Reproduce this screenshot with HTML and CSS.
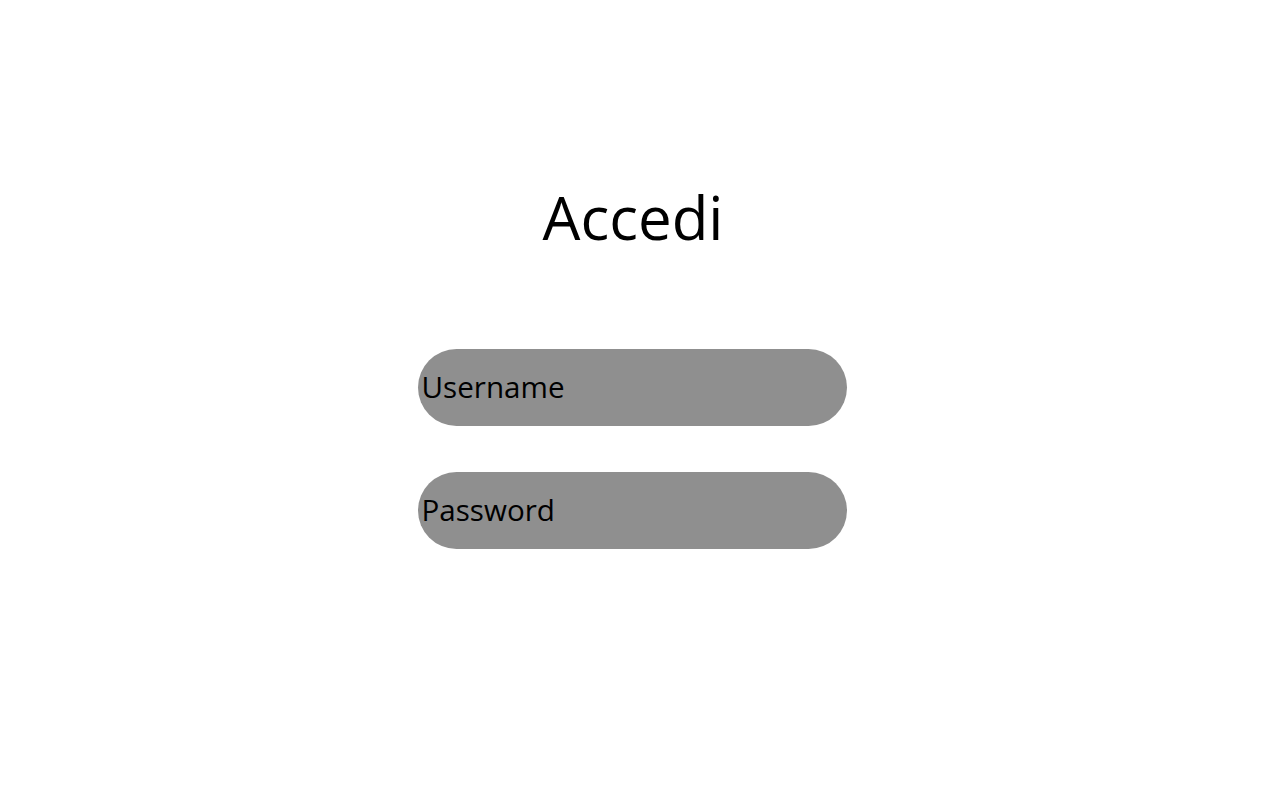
FILE: index.html
```html
<!DOCTYPE html>
<html lang="it">
  <head>
    <meta charset="UTF-8">
    <title>Accedi</title>

    <link rel="stylesheet" href="styles.css">
  </head>
  <body>
    <main class="login">
      <h1>Accedi</h1>
      <form class="login-form">
        <input class="field" type="text" placeholder="Username">
        <input class="field" type="password" placeholder="Password">
      </form>
    </main>
  </body>
</html>
```

FILE: styles.css
```css
html {
  box-sizing: border-box;
  font-family: "Open Sans", sans-serif;
}

*,
*:before,
*:after {
  box-sizing: inherit;
}

body {
  background: #fff;
  margin: 0;
  min-height: 100vh;
}

.login {
  align-items: center;
  display: flex;
  flex-direction: column;
  padding-top: 176px;
}

h1 {
  font-size: 60px;
  font-weight: 400;
  line-height: 82px;
  margin: 0 0 91px 0;
  transform: translateX(-7px);
}

.login-form {
  display: flex;
  flex-direction: column;
  gap: 46px;
  transform: translateX(-8px);
}

.field {
  background: #8f8f8f;
  border: none;
  border-radius: 40px;
  color: #000;
  font-family: "Open Sans", sans-serif;
  font-size: 29.6px;
  height: 77px;
  outline: none;
  padding: 0 3px 3px 4px;
  width: 429px;
}

.field::placeholder {
  color: #000;
  opacity: 1;
}
```
